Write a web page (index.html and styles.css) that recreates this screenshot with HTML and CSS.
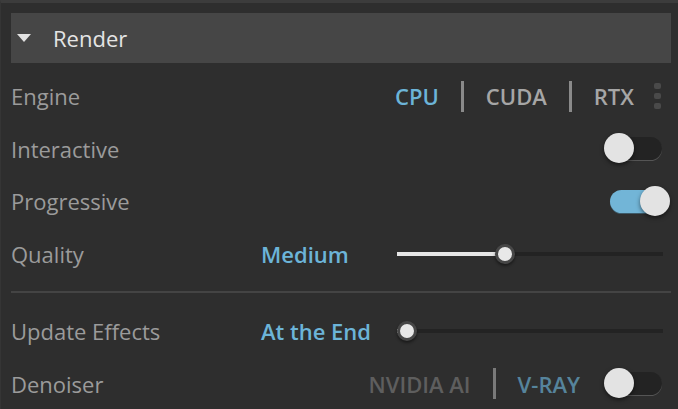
FILE: index.html
```html
<!DOCTYPE html>
<html lang="en">
<head>
  <meta charset="UTF-8">
  <title>Render</title>
  <link rel="stylesheet" href="styles.css">
</head>
<body>

  <div class="panel">
    <div class="section-head">
      <span class="caret"></span>
      <span class="section-title">Render</span>
    </div>

    <div class="row">
      <span class="label">Engine</span>
      <div class="segments">
        <span class="seg active">CPU</span>
        <span class="divider"></span>
        <span class="seg">CUDA</span>
        <span class="divider"></span>
        <span class="seg">RTX</span>
      </div>
      <span class="more"><i></i><i></i><i></i></span>
    </div>

    <div class="row">
      <span class="label">Interactive</span>
      <span class="toggle"><span class="knob"></span></span>
    </div>

    <div class="row">
      <span class="label">Progressive</span>
      <span class="toggle on"><span class="knob"></span></span>
    </div>

    <div class="row">
      <span class="label">Quality</span>
      <span class="value">Medium</span>
      <div class="slider" style="--v: 0.4">
        <span class="fill"></span>
        <span class="thumb"></span>
      </div>
    </div>

    <hr class="sep">

    <div class="row">
      <span class="label">Update Effects</span>
      <span class="value">At the End</span>
      <div class="slider" style="--v: 0">
        <span class="fill"></span>
        <span class="thumb"></span>
      </div>
    </div>

    <div class="row">
      <span class="label">Denoiser</span>
      <div class="segments dim">
        <span class="seg">NVIDIA AI</span>
        <span class="divider"></span>
        <span class="seg active">V-RAY</span>
      </div>
      <span class="toggle"><span class="knob"></span></span>
    </div>
  </div>

</body>
</html>
```

FILE: styles.css
```css
* {
  margin: 0;
  padding: 0;
  box-sizing: border-box;
  font-family: 'Open Sans', sans-serif;
}
body {
  background: #2e2e2e;
  color: #9b9b9b;
  border-top: 3px solid #3c3c3c;
  border-left: 1px solid #353535;
  min-height: 100vh;
  overflow: hidden;
}

.panel {
  padding: 10px 7px 0 10px;
}

/* Section header */
.section-head {
  display: flex;
  align-items: center;
  height: 50px;
  background: #464646;
  padding-left: 6px;
  margin-bottom: 7px;
}
.caret {
  width: 0;
  height: 0;
  border-left: 7.5px solid transparent;
  border-right: 7.5px solid transparent;
  border-top: 8px solid #e2e2e2;
  margin-right: 22px;
}
.section-title {
  font-size: 22px;
  color: #e4e4e4;
}

/* Rows */
.row {
  display: flex;
  align-items: center;
  height: 52.5px;
  font-size: 22px;
}
.label {
  width: 250px;
  flex-shrink: 0;
}
.value {
  width: 136px;
  flex-shrink: 0;
  color: #6cb4d8;
  font-weight: 600;
}

/* Segmented choice */
.segments {
  display: flex;
  align-items: center;
  margin-left: auto;
  gap: 22px;
  font-weight: 600;
  color: #a6a6a6;
}
.seg.active {
  color: #6cb4d8;
}
.divider {
  width: 3px;
  height: 31px;
  background: #8a8a8a;
}
.segments.dim .seg {
  color: #5e5e5e;
}
.segments.dim .seg.active {
  color: #56849c;
}
.segments.dim .divider {
  background: #7a7a7a;
}

.more {
  display: flex;
  flex-direction: column;
  gap: 4px;
  margin: 0 10px 0 20px;
}
.more i {
  width: 7px;
  height: 6px;
  border-radius: 2px;
  background: #4a4a4a;
}

/* Toggle */
.toggle {
  position: relative;
  width: 52px;
  height: 23px;
  border-radius: 12px;
  background: #232323;
  box-shadow: 0 1px 0 #555;
  margin-left: auto;
  margin-right: 9px;
}
.segments + .toggle {
  margin-left: 30px;
}
.toggle .knob {
  position: absolute;
  top: -4px;
  left: -6px;
  width: 30px;
  height: 30px;
  border-radius: 50%;
  background: #e3e3e3;
  box-shadow: 0 2px 4px rgba(0, 0, 0, 0.5);
}
.toggle.on {
  background: #72b5d7;
  box-shadow: 0 1px 0 #3e5a68;
}
.toggle.on .knob {
  left: 30px;
}

/* Slider */
.slider {
  position: relative;
  flex: 1;
  height: 4px;
  background: #232323;
  margin-right: 8px;
}
.slider .fill {
  display: block;
  height: 100%;
  width: calc((100% - 20px) * var(--v) + 10px);
  background: #e6e6e6;
}
.slider .thumb {
  position: absolute;
  top: -8px;
  left: calc((100% - 20px) * var(--v));
  width: 20px;
  height: 20px;
  border-radius: 50%;
  background: #e8e8e8;
  border: 3px solid #474747;
  box-shadow: 0 2px 3px rgba(0, 0, 0, 0.45);
}

.sep {
  border: none;
  height: 2px;
  background: #444;
  margin: 11px 0 12px;
}
```
